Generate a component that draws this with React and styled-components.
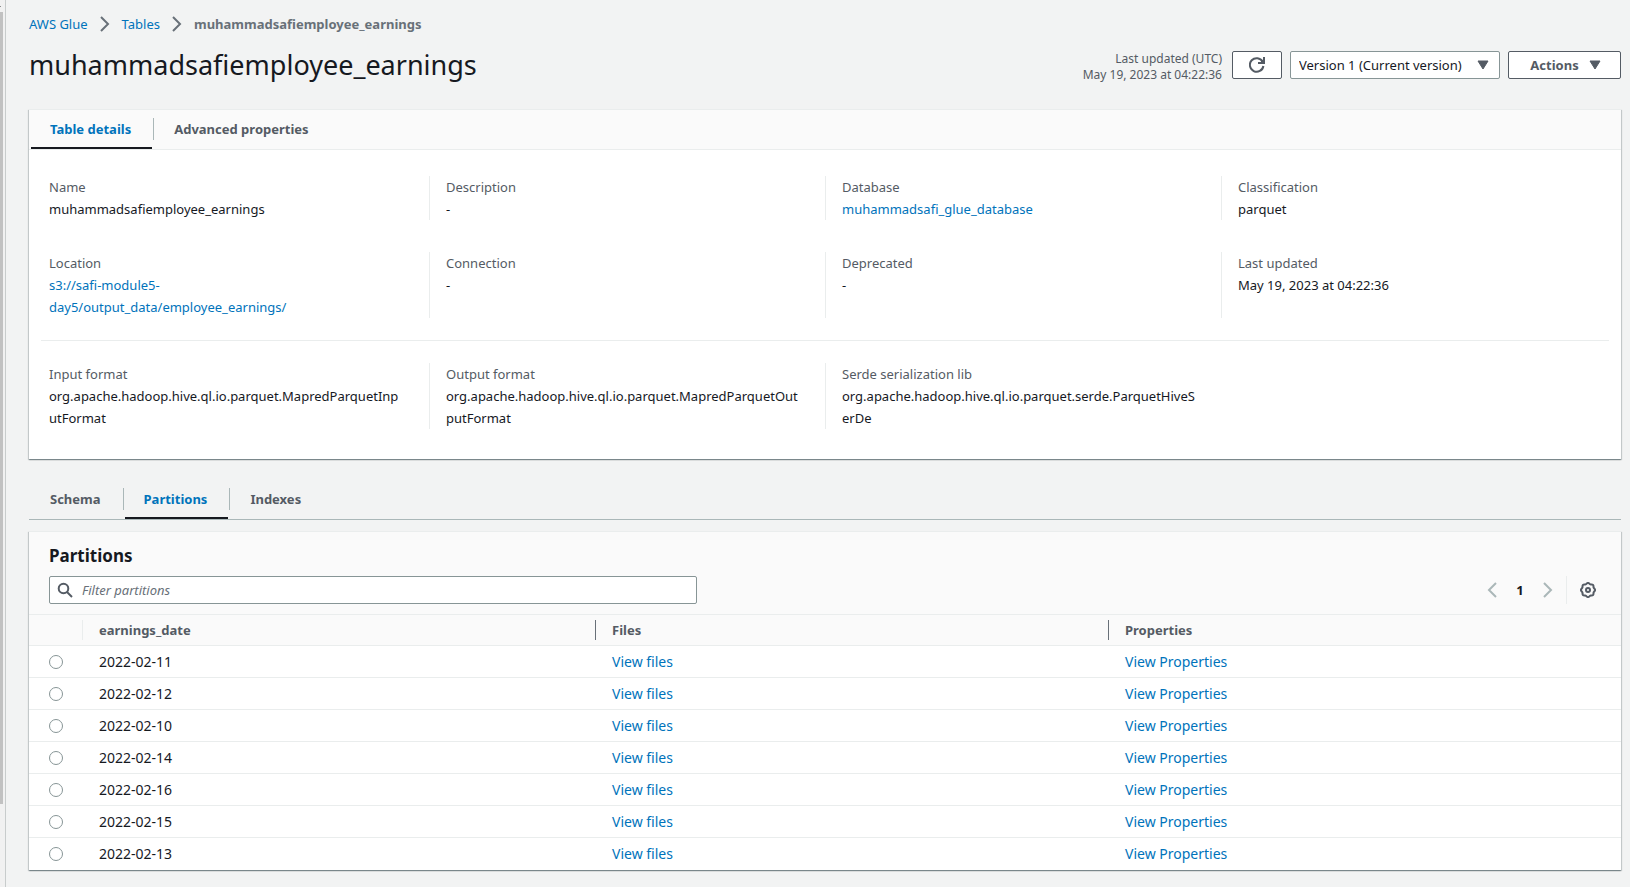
import React, { useState } from "react";
import styled, { createGlobalStyle, ThemeProvider } from "styled-components";

const theme = {
  page: "#f2f3f3",
  surface: "#ffffff",
  header: "#fafafa",
  text: "#16191f",
  muted: "#545b64",
  subtle: "#687078",
  link: "#0073bb",
  line: "#eaeded",
  divider: "#aab7b8",
  control: "#879596",
};

const GlobalStyle = createGlobalStyle`
  *, *::before, *::after { box-sizing: border-box; }
  body {
    margin: 0;
    background: ${theme.page};
    color: ${theme.text};
    font-family: "Noto Sans", "Open Sans", sans-serif;
    font-size: 13px;
    line-height: 22px;
  }
  button, input, select { font: inherit; color: inherit; }
`;

const Shell = styled.div`
  display: flex;
  min-height: 100vh;
`;

const ScrollRail = styled.div`
  flex: 0 0 6px;
  display: flex;
  flex-direction: column;
  background: #f1f1f1;
  border-right: 1px solid #c8cccc;
`;

const RailArrow = styled.span`
  height: 12px;
  padding-top: 6px;

  &::before {
    content: "";
    display: block;
    width: 1px;
    height: 1px;
    background: #8b8b8b;
  }
`;

const RailThumb = styled.span`
  flex: 792 0 0;
  width: 3px;
  background: #c1c1c1;
`;

const RailRest = styled.span`
  flex: 83 0 0;
`;

const Main = styled.main`
  flex: 1;
  min-width: 0;
  padding: 14px 9px 16px 23px;
`;

const Breadcrumbs = styled.nav`
  ol {
    display: flex;
    align-items: center;
    gap: 9px;
    margin: 0;
    padding: 0;
    list-style: none;
    line-height: 20px;
  }
  li {
    display: flex;
    align-items: center;
    gap: 9px;
  }
`;

const CurrentCrumb = styled.span`
  font-weight: 700;
  color: ${(p) => p.theme.subtle};
`;

const Link = styled.a`
  color: ${(p) => p.theme.link};
  text-decoration: none;
  overflow-wrap: anywhere;

  &:hover { text-decoration: underline; }
`;

const FieldLink = styled(Link)`
  display: inline-block;
  max-width: 90%;
  vertical-align: top;
`;

const Icon = styled.svg`
  flex: none;
  display: block;
  width: 16px;
  height: 16px;
  fill: none;
  stroke: currentColor;
  stroke-width: 2;
`;

const CrumbIcon = styled(Icon)`
  color: ${(p) => p.theme.subtle};
`;

const PageHeader = styled.header`
  display: flex;
  align-items: center;
  justify-content: space-between;
  gap: 16px;
  margin: 13px 0 26px;
`;

const Title = styled.h1`
  margin: 0;
  font-size: 27px;
  font-weight: 400;
  line-height: 36px;
`;

const HeaderActions = styled.div`
  display: flex;
  align-items: center;
  gap: 8px;
`;

const Updated = styled.p`
  margin: 0 2px 0 0;
  padding-top: 4px;
  font-size: 12px;
  line-height: 16px;
  text-align: right;
  color: ${(p) => p.theme.muted};
`;

const Button = styled.button`
  display: inline-flex;
  align-items: center;
  justify-content: center;
  gap: 8px;
  height: 28px;
  min-width: ${(p) => (p.$iconOnly ? "50px" : "113px")};
  padding: ${(p) => (p.$iconOnly ? "0 16px" : "0 16px 0 20px")};
  border: 1px solid ${(p) => p.theme.muted};
  border-radius: 2px;
  background: ${(p) => p.theme.surface};
  color: ${(p) => p.theme.muted};
  font-weight: 700;
  cursor: pointer;
`;

const SelectBox = styled.div`
  position: relative;
  width: 210px;
  color: ${(p) => p.theme.muted};

  svg {
    position: absolute;
    top: 6px;
    right: 9px;
    pointer-events: none;
  }
`;

const Select = styled.select`
  appearance: none;
  display: block;
  width: 100%;
  height: 28px;
  padding: 0 28px 0 8px;
  border: 1px solid ${(p) => p.theme.control};
  border-radius: 2px;
  background: ${(p) => p.theme.surface};
  color: ${(p) => p.theme.text};
`;

const Card = styled.section`
  border-top: 1px solid ${(p) => p.theme.line};
  background: ${(p) => p.theme.surface};
  box-shadow:
    0 1px 1px 0 rgba(0, 28, 36, 0.3),
    1px 1px 1px 0 rgba(0, 28, 36, 0.15),
    -1px 1px 1px 0 rgba(0, 28, 36, 0.15);
`;

const TabList = styled.div`
  display: flex;
  padding-left: 2px;
  background: ${(p) => (p.$inCard ? p.theme.header : "transparent")};
  border-bottom: 1px solid ${(p) => (p.$inCard ? p.theme.line : p.theme.divider)};
  margin: ${(p) => (p.$inCard ? "0" : "21px 0 11px")};
`;

const TabItem = styled.div`
  display: flex;

  & + &::before {
    content: "";
    width: 1px;
    height: 22px;
    margin: 8px 1px 0;
    background: ${(p) => p.theme.divider};
  }
`;

const Tab = styled.button`
  height: 39px;
  padding: 8px 21px 7px 19px;
  border: 0;
  border-bottom: 2px solid ${(p) => (p.$active ? p.theme.text : "transparent")};
  background: none;
  color: ${(p) => (p.$active ? p.theme.link : p.theme.muted)};
  font-weight: 700;
  line-height: 22px;
  cursor: pointer;
`;

const Details = styled.div`
  padding: 26px 4px 30px;
`;

const FieldGrid = styled.dl`
  display: grid;
  grid-template-columns: repeat(4, minmax(0, 1fr));
  row-gap: 32px;
  margin: 0;
`;

const Field = styled.div`
  padding: 0 24px 0 16px;

  &:not(:nth-child(4n + 1)) {
    border-left: 1px solid ${(p) => p.theme.line};
  }
`;

const FieldLabel = styled.dt`
  color: ${(p) => p.theme.muted};
`;

const FieldValue = styled.dd`
  margin: 0;
  overflow-wrap: anywhere;
`;

const Rule = styled.hr`
  margin: 22px 8px;
  border: 0;
  border-top: 1px solid ${(p) => p.theme.line};
`;

const TableHeader = styled.header`
  padding: 12px 20px 10px;
  background: ${(p) => p.theme.header};
`;

const CardTitle = styled.h2`
  margin: 0 0 8px;
  font-size: 17px;
  line-height: 24px;
`;

const Toolbar = styled.div`
  display: flex;
  align-items: center;
  justify-content: space-between;
  gap: 16px;
`;

const Search = styled.label`
  display: flex;
  align-items: center;
  gap: 9px;
  flex: 0 1 648px;
  height: 28px;
  padding: 0 7px;
  border: 1px solid ${(p) => p.theme.control};
  border-radius: 2px;
  background: ${(p) => p.theme.surface};
  color: ${(p) => p.theme.muted};
`;

const SearchInput = styled.input`
  flex: 1;
  min-width: 0;
  padding: 0;
  border: 0;
  outline: 0;
  background: none;
  color: ${(p) => p.theme.text};

  &::placeholder {
    color: ${(p) => p.theme.subtle};
    font-style: italic;
    opacity: 1;
  }
`;

const Controls = styled.div`
  display: flex;
  align-items: center;
`;

const Pagination = styled.nav`
  display: flex;
  padding-right: 4px;
  margin-right: 8px;
  border-right: 1px solid ${(p) => p.theme.line};
`;

const FlatButton = styled.button`
  display: flex;
  align-items: center;
  justify-content: center;
  width: ${(p) => (p.$narrow ? "26px" : "28px")};
  height: 28px;
  padding: 0;
  border: 0;
  background: none;
  color: ${(p) => (p.disabled ? p.theme.divider : p.$current ? p.theme.text : p.theme.muted)};
  font-weight: 700;
`;

const Table = styled.table`
  width: 100%;
  table-layout: fixed;
  border-collapse: separate;
  border-spacing: 0;
  text-align: left;
`;

const HeadCell = styled.th`
  width: ${(p) => (p.$selection ? "53px" : "auto")};
  padding: 5px 0;
  border: solid ${(p) => p.theme.line};
  border-width: 1px 0;
  background: ${(p) => p.theme.header};
  color: ${(p) => p.theme.muted};
`;

const HeadLabel = styled.div`
  height: 20px;
  padding-left: 16px;
  border-left: 1px solid ${(p) => (p.$light ? p.theme.line : p.theme.subtle)};
  line-height: 20px;
`;

const Cell = styled.td`
  height: 32px;
  padding: 0 16px 0 ${(p) => (p.$selection ? "20px" : "17px")};
  border-bottom: 1px solid ${(p) => p.theme.line};
  font-size: 14px;

  tr:last-child > & { border-bottom: 0; }
`;

const Radio = styled.input`
  appearance: none;
  display: block;
  width: 14px;
  height: 14px;
  margin: 0;
  border: 1px solid ${(p) => p.theme.control};
  border-radius: 50%;
  background: ${(p) => p.theme.surface};

  &:checked { border: 4px solid ${(p) => p.theme.link}; }
`;

const chevronRight = "M4 1l7 7-7 7";
const chevronLeft = "M12 1L5 8l7 7";

const Caret = () => (
  <Icon viewBox="0 0 16 16" aria-hidden="true">
    <path d="M3 4h10L8 12z" fill="currentColor" stroke="currentColor" strokeWidth="1" strokeLinejoin="round" />
  </Icon>
);

// Eight-lobed gear outline around the icon centre.
const gearPath =
  Array.from({ length: 64 }, (_, i) => {
    const a = (i / 64) * Math.PI * 2;
    const r = 6.6 + 0.5 * Math.cos(8 * a);
    return `${i ? "L" : "M"}${(8 + r * Math.cos(a)).toFixed(2)} ${(8 + r * Math.sin(a)).toFixed(2)}`;
  }).join("") + "Z";

const general = [
  ["Name", "muhammadsafiemployee_earnings"],
  ["Description", "-"],
  ["Database", "muhammadsafi_glue_database", true],
  ["Classification", "parquet"],
  ["Location", "s3://safi-module5-day5/output_data/employee_earnings/", true],
  ["Connection", "-"],
  ["Deprecated", "-"],
  ["Last updated", "May 19, 2023 at 04:22:36"],
];

const formats = [
  ["Input format", "org.apache.hadoop.hive.ql.io.parquet.MapredParquetInputFormat"],
  ["Output format", "org.apache.hadoop.hive.ql.io.parquet.MapredParquetOutputFormat"],
  ["Serde serialization lib", "org.apache.hadoop.hive.ql.io.parquet.serde.ParquetHiveSerDe"],
];

const partitions = [
  "2022-02-11",
  "2022-02-12",
  "2022-02-10",
  "2022-02-14",
  "2022-02-16",
  "2022-02-15",
  "2022-02-13",
];

const Fields = ({ items }) => (
  <FieldGrid>
    {items.map(([label, value, linked]) => (
      <Field key={label}>
        <FieldLabel>{label}</FieldLabel>
        <FieldValue>{linked ? <FieldLink href="#">{value}</FieldLink> : value}</FieldValue>
      </Field>
    ))}
  </FieldGrid>
);

const Tabs = ({ names, initial, inCard, label }) => {
  const [active, setActive] = useState(initial);
  return (
    <TabList role="tablist" aria-label={label} $inCard={inCard}>
      {names.map((name) => (
        <TabItem key={name} role="presentation">
          <Tab
            type="button"
            role="tab"
            aria-selected={name === active}
            $active={name === active}
            onClick={() => setActive(name)}
          >
            {name}
          </Tab>
        </TabItem>
      ))}
    </TabList>
  );
};

export default function App() {
  const [selected, setSelected] = useState(null);

  return (
    <ThemeProvider theme={theme}>
      <GlobalStyle />
      <Shell>
        <ScrollRail aria-hidden="true">
          <RailArrow />
          <RailThumb />
          <RailRest />
        </ScrollRail>
        <Main>
          <Breadcrumbs aria-label="Breadcrumbs">
            <ol>
              {["AWS Glue", "Tables"].map((crumb) => (
                <li key={crumb}>
                  <Link href="#">{crumb}</Link>
                  <CrumbIcon viewBox="0 0 16 16" aria-hidden="true">
                    <path d={chevronRight} />
                  </CrumbIcon>
                </li>
              ))}
              <li>
                <CurrentCrumb aria-current="page">muhammadsafiemployee_earnings</CurrentCrumb>
              </li>
            </ol>
          </Breadcrumbs>

          <PageHeader>
            <Title>muhammadsafiemployee_earnings</Title>
            <HeaderActions>
              <Updated>
                Last updated (UTC)
                <br />
                May 19, 2023 at 04:22:36
              </Updated>
              <Button type="button" $iconOnly aria-label="Refresh">
                <Icon viewBox="0 0 16 16" aria-hidden="true">
                  <path d="M14.4 9A6.8 6.8 0 1 1 13.6 4.6" />
                  <path d="M15 0v6H9" />
                  <path d="M11.5 5.5L14.5 2.5V5.5z" fill="currentColor" strokeWidth="1" />
                </Icon>
              </Button>
              <SelectBox>
                <Select aria-label="Table version" defaultValue="1">
                  <option value="1">Version 1 (Current version)</option>
                </Select>
                <Caret />
              </SelectBox>
              <Button type="button" aria-haspopup="menu">
                Actions
                <Caret />
              </Button>
            </HeaderActions>
          </PageHeader>

          <Card>
            <Tabs
              inCard
              label="Table information"
              names={["Table details", "Advanced properties"]}
              initial="Table details"
            />
            <Details>
              <Fields items={general} />
              <Rule />
              <Fields items={formats} />
            </Details>
          </Card>

          <Tabs label="Table contents" names={["Schema", "Partitions", "Indexes"]} initial="Partitions" />

          <Card>
            <TableHeader>
              <CardTitle>Partitions</CardTitle>
              <Toolbar>
                <Search>
                  <Icon viewBox="0 0 16 16" aria-hidden="true">
                    <circle cx="6.5" cy="6.5" r="4.8" />
                    <path d="M10 10l5 5" />
                  </Icon>
                  <SearchInput type="text" placeholder="Filter partitions" aria-label="Filter partitions" />
                </Search>
                <Controls>
                  <Pagination aria-label="Pagination">
                    <FlatButton type="button" disabled aria-label="Previous page">
                      <Icon viewBox="0 0 16 16" aria-hidden="true">
                        <path d={chevronLeft} />
                      </Icon>
                    </FlatButton>
                    <FlatButton type="button" $current aria-current="page">
                      1
                    </FlatButton>
                    <FlatButton type="button" disabled aria-label="Next page">
                      <Icon viewBox="0 0 16 16" aria-hidden="true">
                        <path d={chevronRight} />
                      </Icon>
                    </FlatButton>
                  </Pagination>
                  <FlatButton type="button" $narrow aria-label="Preferences">
                    <Icon viewBox="0 0 16 16" aria-hidden="true">
                      <path d={gearPath} />
                      <circle cx="8" cy="8" r="2" />
                    </Icon>
                  </FlatButton>
                </Controls>
              </Toolbar>
            </TableHeader>
            <Table>
              <thead>
                <tr>
                  <HeadCell $selection scope="col" aria-label="Selection" />
                  <HeadCell scope="col">
                    <HeadLabel $light>earnings_date</HeadLabel>
                  </HeadCell>
                  <HeadCell scope="col">
                    <HeadLabel>Files</HeadLabel>
                  </HeadCell>
                  <HeadCell scope="col">
                    <HeadLabel>Properties</HeadLabel>
                  </HeadCell>
                </tr>
              </thead>
              <tbody>
                {partitions.map((date) => (
                  <tr key={date}>
                    <Cell $selection>
                      <Radio
                        type="radio"
                        name="partition"
                        aria-label={date}
                        checked={selected === date}
                        onChange={() => setSelected(date)}
                      />
                    </Cell>
                    <Cell>{date}</Cell>
                    <Cell>
                      <Link href="#">View files</Link>
                    </Cell>
                    <Cell>
                      <Link href="#">View Properties</Link>
                    </Cell>
                  </tr>
                ))}
              </tbody>
            </Table>
          </Card>
        </Main>
      </Shell>
    </ThemeProvider>
  );
}
